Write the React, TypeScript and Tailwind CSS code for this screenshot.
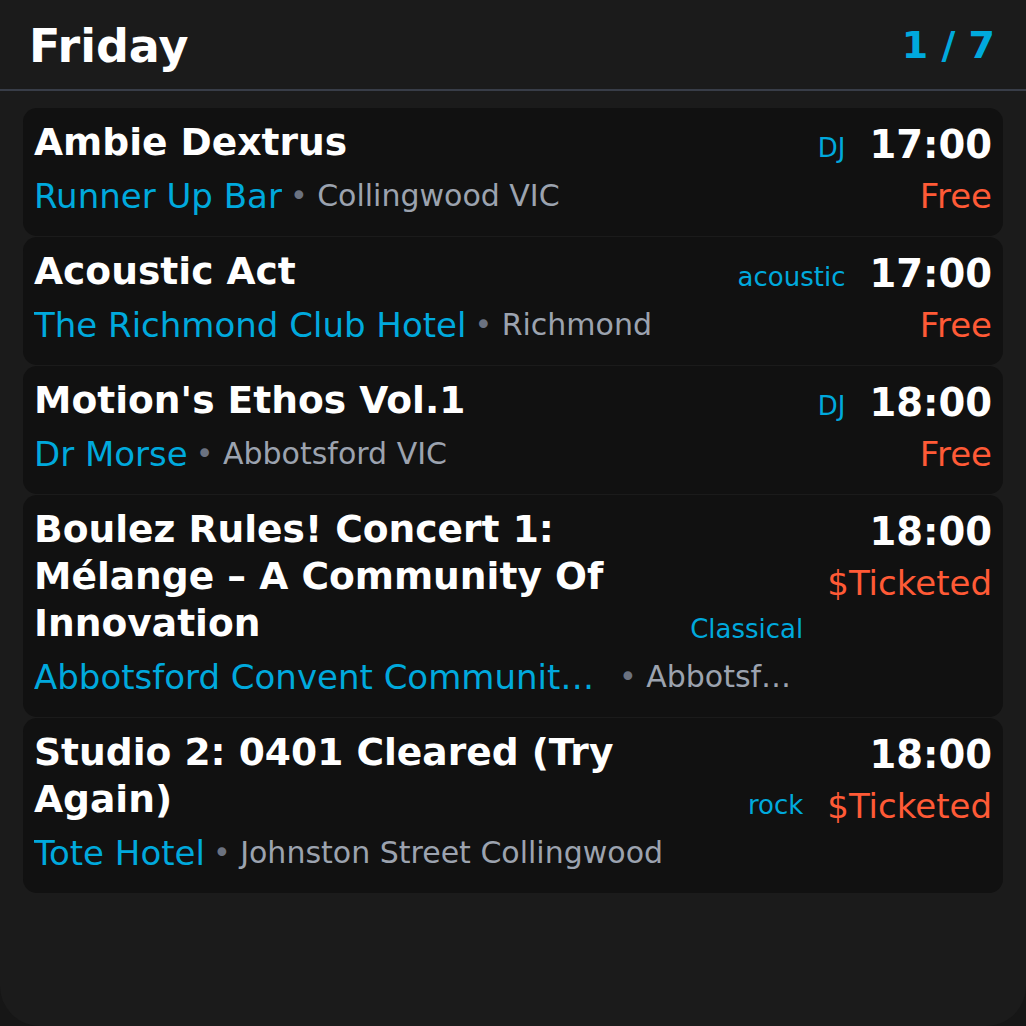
const events = [
  {title: "Ambie Dextrus", genre: "DJ", time: "17:00", price: "Free", venue: "Runner Up Bar", location: "Collingwood VIC"},
  {title: "Acoustic Act", genre: "acoustic", time: "17:00", price: "Free", venue: "The Richmond Club Hotel", location: "Richmond"},
  {title: "Motion's Ethos Vol.1", genre: "DJ", time: "18:00", price: "Free", venue: "Dr Morse", location: "Abbotsford VIC"},
  {title: "Boulez Rules! Concert 1: Mélange – A Community Of Innovation", genre: "Classical", time: "18:00", price: "$Ticketed", venue: "Abbotsford Convent Community Hall", location: "Abbotsford VIC"},
  {title: "Studio 2: 0401 Cleared (Try Again)", genre: "rock", time: "18:00", price: "$Ticketed", venue: "Tote Hotel", location: "Johnston Street Collingwood"},
];

const App: React.FC = () => {
  return (
    <div className="min-h-screen bg-[#161616] font-['DejaVu_Sans',sans-serif]">
      <div className="min-h-[1026px] bg-[#1b1b1b] rounded-b-[40px]">
        <div className="flex justify-between items-start pt-[23px] pb-[20px] pl-[29px] pr-[31px] border-b-2 border-[#383d48]">
          <h1 className="text-[46px] leading-none font-bold text-white">Friday</h1>
          <span className="mt-[3px] text-[38px] leading-none font-bold text-[#00a9dd]">1 / 7</span>
        </div>
        <div className="flex flex-col gap-px px-[23px] pt-[17px]">
          {events.map((ev, index) => (
            <div
              key={index}
              className="flex gap-6 rounded-[14px] bg-[#111111] pl-[11px] pr-[11px] pt-[11px] pb-[15px]"
            >
              <div className="flex flex-col flex-1 min-w-0">
                <div className="flex items-end gap-4">
                  <p className="flex-1 text-[37.6px] leading-[47px] font-bold text-white">{ev.title}</p>
                  <span className="shrink-0 text-[26px] leading-[35px] text-[#00a9dd]">{ev.genre}</span>
                </div>
                <div className="flex mt-[5px] leading-[50px] whitespace-nowrap">
                  <span className="shrink-0 max-w-[75%] truncate text-[34px] text-[#00a9dd]">{ev.venue}</span>
                  <span className="min-w-0 ml-[8px] truncate text-[30px] text-[#9ca3af]">
                    <span className="text-[#6b7280]">•</span> {ev.location}
                  </span>
                </div>
              </div>
              <div className="flex flex-col items-end shrink-0">
                <span className="text-[38.5px] leading-[51px] font-bold text-white">{ev.time}</span>
                <span className="mt-[1px] text-[34px] leading-[50px] text-[#ff5a36]">{ev.price}</span>
              </div>
            </div>
          ))}
        </div>
      </div>
    </div>
  );
};

export default App;
